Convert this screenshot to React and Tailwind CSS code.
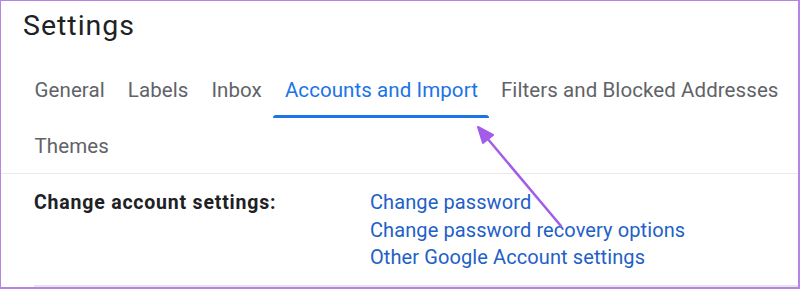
const tabs = [
  { label: 'General' },
  { label: 'Labels' },
  { label: 'Inbox' },
  { label: 'Accounts and Import', active: true },
  { label: 'Filters and Blocked Addresses' },
  { label: 'Themes' },
];

const links = [
  'Change password',
  'Change password recovery options',
  'Other Google Account settings',
];

export default function App() {
  return (
    <div
      className="relative w-[800px] h-[289px] overflow-hidden bg-white border-t border-l border-r-2 border-b-2 border-[#b883e6]"
      style={{ fontFamily: 'Roboto, "Liberation Sans", sans-serif' }}
    >
      <div className="h-[61px] pl-[22px] pt-[7px]">
        <h1 className="text-[28.5px] leading-[36px] tracking-[1px] text-[#202124]">Settings</h1>
      </div>

      <div className="flex flex-wrap w-[797px] pl-[22px]">
        {tabs.map((t) => (
          <div
            key={t.label}
            className={`relative h-[56px] px-[11.5px] flex items-center text-[20.5px] tracking-[0.08px] ${
              t.active ? 'text-[#1a73e8]' : 'text-[#5f6368]'
            }`}
          >
            <span>{t.label}</span>
            {t.active && (
              <div className="absolute left-0 right-0 bottom-0 h-[3px] rounded-t-[3px] bg-[#1a73e8]" />
            )}
          </div>
        ))}
      </div>

      <div className="h-px bg-[#e8eaed] -mt-[1px]" />

      <div className="flex pl-[33px] pt-[15px]">
        <div className="w-[336px] text-[19.5px] font-bold tracking-[0.8px] text-[#202124] leading-[28px]">
          Change account settings:
        </div>
        <div className="flex flex-col">
          {links.map((l) => (
            <a key={l} className="text-[20px] leading-[27.5px] tracking-[0.1px] text-[#2260c8]">
              {l}
            </a>
          ))}
        </div>
      </div>

      <div className="absolute left-[33px] right-0 bottom-0 h-[2px] bg-[#e6e6e6]" />

      <svg className="absolute left-0 top-0 pointer-events-none" width="800" height="289">
        <line x1="560" y1="225" x2="486" y2="137" stroke="#a25ce9" strokeWidth="2.5" strokeLinecap="round" />
        <polygon points="477,126 492,134 482,142" fill="#a25ce9" stroke="#a25ce9" strokeWidth="2" strokeLinejoin="round" />
      </svg>
    </div>
  );
}
